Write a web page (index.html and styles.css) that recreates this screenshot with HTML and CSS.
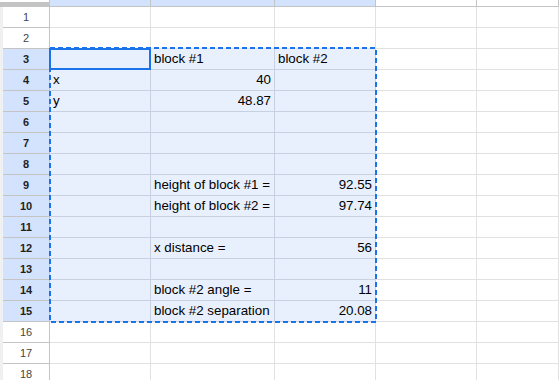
FILE: index.html
```html
<!DOCTYPE html>
<html lang="en">
<head>
    <meta charset="UTF-8">
    <meta name="viewport" content="width=device-width, initial-scale=1.0">
    <title>Block distances - Sheet1</title>
    <link rel="stylesheet" href="styles.css">
</head>
<body>
    <div class="sheet">
        <!-- Column headers (scrolled so only a sliver is visible) -->
        <div class="row col-heads">
            <div class="corner"></div>
            <div class="col-head sel"></div>
            <div class="col-head sel"></div>
            <div class="col-head sel"></div>
            <div class="col-head"></div>
            <div class="col-head"></div>
        </div>

        <div class="row">
            <div class="row-head">1</div>
            <div class="cell"></div><div class="cell"></div><div class="cell"></div><div class="cell"></div><div class="cell"></div>
        </div>
        <div class="row">
            <div class="row-head">2</div>
            <div class="cell"></div><div class="cell"></div><div class="cell"></div><div class="cell"></div><div class="cell"></div>
        </div>

        <!-- Selected range A3:C15 -->
        <div class="row">
            <div class="row-head sel">3</div>
            <div class="cell sel"></div><div class="cell sel">block #1</div><div class="cell sel">block #2</div><div class="cell"></div><div class="cell"></div>
        </div>
        <div class="row">
            <div class="row-head sel">4</div>
            <div class="cell sel">x</div><div class="cell sel num">40</div><div class="cell sel"></div><div class="cell"></div><div class="cell"></div>
        </div>
        <div class="row">
            <div class="row-head sel">5</div>
            <div class="cell sel">y</div><div class="cell sel num">48.87</div><div class="cell sel"></div><div class="cell"></div><div class="cell"></div>
        </div>
        <div class="row">
            <div class="row-head sel">6</div>
            <div class="cell sel"></div><div class="cell sel"></div><div class="cell sel"></div><div class="cell"></div><div class="cell"></div>
        </div>
        <div class="row">
            <div class="row-head sel">7</div>
            <div class="cell sel"></div><div class="cell sel"></div><div class="cell sel"></div><div class="cell"></div><div class="cell"></div>
        </div>
        <div class="row">
            <div class="row-head sel">8</div>
            <div class="cell sel"></div><div class="cell sel"></div><div class="cell sel"></div><div class="cell"></div><div class="cell"></div>
        </div>
        <div class="row">
            <div class="row-head sel">9</div>
            <div class="cell sel"></div><div class="cell sel">height of block #1 =</div><div class="cell sel num">92.55</div><div class="cell"></div><div class="cell"></div>
        </div>
        <div class="row">
            <div class="row-head sel">10</div>
            <div class="cell sel"></div><div class="cell sel">height of block #2 =</div><div class="cell sel num">97.74</div><div class="cell"></div><div class="cell"></div>
        </div>
        <div class="row">
            <div class="row-head sel">11</div>
            <div class="cell sel"></div><div class="cell sel"></div><div class="cell sel"></div><div class="cell"></div><div class="cell"></div>
        </div>
        <div class="row">
            <div class="row-head sel">12</div>
            <div class="cell sel"></div><div class="cell sel">x distance =</div><div class="cell sel num">56</div><div class="cell"></div><div class="cell"></div>
        </div>
        <div class="row">
            <div class="row-head sel">13</div>
            <div class="cell sel"></div><div class="cell sel"></div><div class="cell sel"></div><div class="cell"></div><div class="cell"></div>
        </div>
        <div class="row">
            <div class="row-head sel">14</div>
            <div class="cell sel"></div><div class="cell sel">block #2 angle =</div><div class="cell sel num">11</div><div class="cell"></div><div class="cell"></div>
        </div>
        <div class="row">
            <div class="row-head sel">15</div>
            <div class="cell sel"></div><div class="cell sel">block #2 separation</div><div class="cell sel num">20.08</div><div class="cell"></div><div class="cell"></div>
        </div>

        <div class="row">
            <div class="row-head">16</div>
            <div class="cell"></div><div class="cell"></div><div class="cell"></div><div class="cell"></div><div class="cell"></div>
        </div>
        <div class="row">
            <div class="row-head">17</div>
            <div class="cell"></div><div class="cell"></div><div class="cell"></div><div class="cell"></div><div class="cell"></div>
        </div>
        <div class="row">
            <div class="row-head">18</div>
            <div class="cell"></div><div class="cell"></div><div class="cell"></div><div class="cell"></div><div class="cell"></div>
        </div>

        <!-- Active cell and copied range drawn over the grid -->
        <div class="active-cell"></div>
        <svg class="copy-range" width="328" height="276" viewBox="0 0 328 276">
            <rect x="1" y="1" width="326" height="274" fill="none" stroke="#1a73e8" stroke-width="2" stroke-dasharray="5 3"/>
        </svg>
    </div>
</body>
</html>
```

FILE: styles.css
```css
body {
    margin: 0;
    padding: 0;
    overflow: hidden;
    background: #fff;
    font-family: "Liberation Sans", Arial, sans-serif;
}
.sheet {
    position: relative;
    padding-left: 3px;
    background: #eef0f1; /* strip left of row numbers */
    height: 380px;
}
.row {
    display: grid;
    grid-template-columns: 47px 101px 124px 101px 101px 1fr;
    height: 21px;
}
.col-heads {
    height: 7px;
}
.corner {
    box-sizing: border-box;
    height: 7px;
    background: #fff;
    border-bottom: 5px solid #c4c4c4;
    border-right: 1px solid #c4c4c4;
    margin-left: -3px;
    width: 50px;
}
.col-head {
    box-sizing: border-box;
    height: 7px;
    background: #fff;
    border-right: 1px solid #c4c4c4;
    border-bottom: 1px solid #c4c4c4;
}
.col-head.sel {
    background: #d3e3fd;
}
.row-head {
    box-sizing: border-box;
    background: #fff;
    border-right: 1px solid #c4c4c4;
    border-bottom: 1px solid #c4c4c4;
    font-size: 11px;
    line-height: 20px;
    text-align: center;
    color: #444746;
}
.row-head.sel {
    background: #d3e3fd;
    color: #1f1f1f;
    font-weight: bold;
}
.cell {
    box-sizing: border-box;
    background: #fff;
    border-right: 1px solid #e1e1e1;
    border-bottom: 1px solid #e1e1e1;
    padding: 0 3px;
    font-size: 10pt;
    line-height: 20px;
    color: #000;
    white-space: nowrap;
    overflow: hidden;
}
.cell.sel {
    background: #e8f0fe;
    border-color: #c7d1e1;
}
.num {
    text-align: right;
}
.active-cell {
    position: absolute;
    left: 49px;
    top: 48px;
    width: 102px;
    height: 22px;
    box-sizing: border-box;
    border: 2px solid #1a73e8;
}
.copy-range {
    position: absolute;
    left: 49px;
    top: 47px;
}
```
